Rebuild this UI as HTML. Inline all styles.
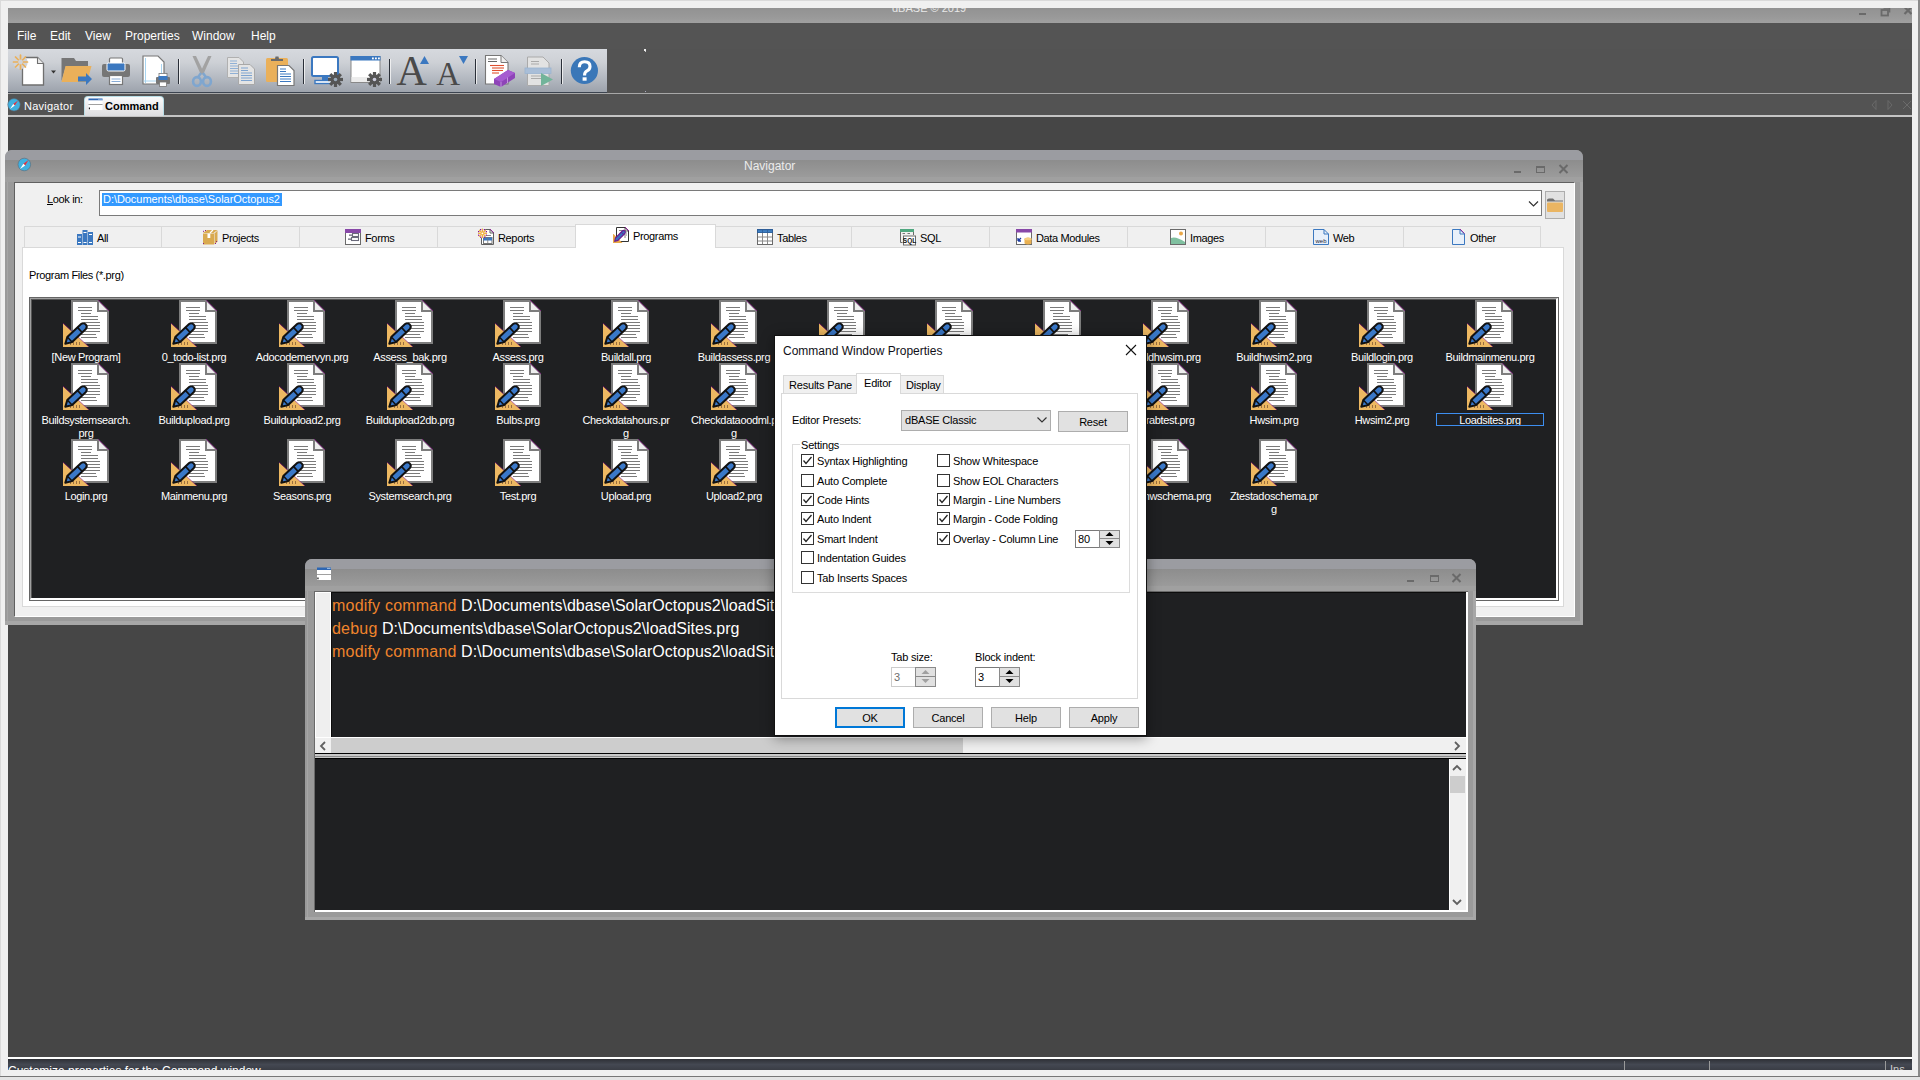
<!DOCTYPE html>
<html><head><meta charset="utf-8">
<style>
*{margin:0;padding:0;box-sizing:border-box}
html,body{width:1920px;height:1080px;overflow:hidden;background:#f0f0f0;font-family:"Liberation Sans",sans-serif;font-size:11px;color:#000}
.a{position:absolute}
.t{position:absolute;white-space:nowrap;line-height:1}
.ms{font-size:11px;letter-spacing:-0.35px}
.dl{font-size:11px;letter-spacing:-0.2px}
</style></head><body>
<svg width="0" height="0" style="position:absolute">
<defs>
<g id="prg">
 <path d="M1 1 H27 L37 11 V43 H1 Z" fill="#fff" stroke="#7d7d7d" stroke-width="2"/>
 <path d="M27 1 V11 H37" fill="#eee" stroke="#7d7d7d" stroke-width="2"/>
 <path d="M27 0 L38 11" stroke="#800080" stroke-width="1" opacity=".6"/>
 <g stroke="#7a7a7a" stroke-width="1">
  <line x1="7" y1="7.5" x2="21" y2="7.5"/><line x1="7" y1="10.5" x2="21" y2="10.5"/>
  <line x1="10" y1="13.5" x2="20" y2="13.5"/><line x1="10" y1="16.5" x2="27" y2="16.5"/>
  <line x1="10" y1="19.5" x2="27" y2="19.5"/><line x1="13" y1="22.5" x2="29" y2="22.5"/>
  <line x1="13" y1="25.5" x2="29" y2="25.5"/><line x1="13" y1="28.5" x2="29" y2="28.5"/>
  <line x1="13" y1="31.5" x2="29" y2="31.5"/><line x1="10" y1="34.5" x2="25" y2="34.5"/>
  <line x1="10" y1="37.5" x2="26" y2="37.5"/>
 </g>
 <path d="M-8 23.5 L18 47 H-8 Z" fill="#edb862"/>
 <path d="M-8 23 L18 47" stroke="#800080" stroke-width="1" opacity=".55"/>
 <g stroke="#9a7040" stroke-width="1"><line x1="2.5" y1="42" x2="2.5" y2="45"/><line x1="5.5" y1="42" x2="5.5" y2="45"/><line x1="8.5" y1="42" x2="8.5" y2="45"/><line x1="-0.5" y1="43" x2="-0.5" y2="45"/></g>
 <path d="M-5.7 43.7 L-3.7 37 L10.1 24 A3.5 3.5 0 0 1 14.9 29 L1.1 42.1 Z" fill="#3a78c8" stroke="#111" stroke-width="2" stroke-linejoin="round"/>
 <path d="M6.4 27.4 L11.2 32.5" stroke="#111" stroke-width="1.8"/>
 <path d="M-3.7 37 L1.1 42.1" stroke="#111" stroke-width="1.5"/>
</g>
</defs></svg>

<div class="a" style="left:0;top:0;width:1920px;height:1px;background:#dadada"></div>
<div class="a" style="left:0;top:0;width:1px;height:1080px;background:#dadada"></div>
<div class="a" style="left:1918px;top:0;width:2px;height:1080px;background:#8a8a8a"></div>
<div class="a" style="left:8px;top:8px;width:1904px;height:15px;background:linear-gradient(#929292,#999 60%,#a0a0a0)"></div>
<div class="a" style="left:8px;top:8px;width:1904px;height:15px;overflow:hidden">
  <div class="t" style="left:884px;top:-5px;font-size:11px;color:#e8e8e8">dBASE © 2019</div>
  <div class="a" style="left:1851px;top:5px;width:7px;height:2px;background:#6a6a6a"></div>
  <svg class="a" style="left:1872px;top:-1px" width="44" height="12"><path d="M3.5 1 H9.5 V5.5" fill="none" stroke="#6a6a6a" stroke-width="1.6"/><rect x="1.5" y="3" width="6.5" height="5.5" fill="none" stroke="#6a6a6a" stroke-width="1.8"/><path d="M24.5 0 L31.5 7 M31.5 0 L24.5 7" stroke="#6a6a6a" stroke-width="2.2"/></svg>
</div>
<div class="a" style="left:8px;top:23px;width:1904px;height:26px;background:#545454"></div>

<div class="t" style="left:17px;top:30px;font-size:12px;color:#fff">File</div>
<div class="t" style="left:50px;top:30px;font-size:12px;color:#fff">Edit</div>
<div class="t" style="left:85px;top:30px;font-size:12px;color:#fff">View</div>
<div class="t" style="left:125px;top:30px;font-size:12px;color:#fff">Properties</div>
<div class="t" style="left:192px;top:30px;font-size:12px;color:#fff">Window</div>
<div class="t" style="left:251px;top:30px;font-size:12px;color:#fff">Help</div>
<div class="a" style="left:8px;top:49px;width:1904px;height:44px;background:#535353"></div>
<div class="a" style="left:8px;top:49px;width:599px;height:43px;background:linear-gradient(#d6d9de 0%,#ced1d6 30%,#b6bbc3 65%,#9da3ac 100%)"></div>
<div class="a" style="left:8px;top:92px;width:599px;height:1px;background:#3c4450"></div>
<div class="a" style="left:8px;top:93px;width:1904px;height:1px;background:#a8a8a8"></div>

<svg class="a" style="left:0;top:0" width="620" height="100" viewBox="0 0 620 100">
<!-- new doc -->
<path d="M22.5 57.5 H37.5 L43.5 63.5 V85 H22.5 Z" fill="#fff" stroke="#6f6f6f" stroke-width="1.3"/>
<path d="M37.5 57.5 V63.5 H43.5" fill="#e8e8e8" stroke="#6f6f6f" stroke-width="1.1"/>
<circle cx="20.5" cy="62" r="7.2" fill="#d0d3d8"/>
<g stroke="#eab05a" stroke-width="1.7" stroke-linecap="round">
<line x1="20.5" y1="55" x2="20.5" y2="69"/><line x1="13.5" y1="62" x2="27.5" y2="62"/>
<line x1="15.5" y1="57" x2="25.5" y2="67"/><line x1="25.5" y1="57" x2="15.5" y2="67"/>
</g>
<circle cx="20.5" cy="62" r="2.4" fill="#d0d3d8"/>
<path d="M51 70.5 H56 L53.5 73.5 Z" fill="#333"/>
<!-- open folder -->
<path d="M61.5 58 H74 L76 61 H88 V66 H66 L61.5 81 Z" fill="#767676"/>
<path d="M65.5 66 H91.5 L87 82 H61.5 Z" fill="#eab05a"/>
<path d="M78 76.5 H86 V73 L92 79 L86 85 V81.5 H78 Z" fill="#3b78c0"/>
<!-- printer -->
<rect x="109.5" y="58" width="13" height="6" rx="1" fill="#fff" stroke="#777" stroke-width="1.2"/>
<rect x="102" y="64" width="28" height="13" rx="2" fill="#767676"/>
<rect x="107" y="63" width="18" height="8" rx="1.5" fill="#3b78c0" stroke="#fff" stroke-width="1"/>
<rect x="109.5" y="75.5" width="13" height="9" fill="#fff" stroke="#777" stroke-width="1.2"/>
<line x1="111.5" y1="79" x2="120.5" y2="79" stroke="#7aa1d0" stroke-width=".9"/>
<line x1="111.5" y1="81.5" x2="120.5" y2="81.5" stroke="#7aa1d0" stroke-width=".9"/>
<!-- print preview -->
<path d="M143 56 H158 L164 62 V84 H143 Z" fill="#fff" stroke="#777" stroke-width="1.2"/>
<path d="M145.5 58 V83 M161.5 64 V83 M143.5 81 H163.5" stroke="#a8d4f0" stroke-width="1"/>
<rect x="156" y="77" width="14" height="7" rx="1" fill="#767676"/>
<rect x="159" y="73.5" width="8" height="4" fill="#fff" stroke="#777" stroke-width=".8"/>
<rect x="158.5" y="76" width="9" height="4" fill="#3b78c0"/>
<rect x="159.5" y="82" width="7" height="4.5" fill="#fff" stroke="#777" stroke-width=".8"/>
<!-- separators -->
<g fill="#2a2f38"><rect x="178" y="59" width="1.2" height="25"/><rect x="303" y="59" width="1.2" height="25"/><rect x="389" y="59" width="1.2" height="25"/><rect x="475" y="59" width="1.2" height="25"/><rect x="561" y="59" width="1.2" height="25"/></g>
<g fill="#fff"><rect x="179.2" y="59" width="0.8" height="25"/><rect x="304.2" y="59" width="0.8" height="25"/><rect x="390.2" y="59" width="0.8" height="25"/><rect x="476.2" y="59" width="0.8" height="25"/><rect x="562.2" y="59" width="0.8" height="25"/></g>
<!-- scissors -->
<path d="M192.5 56 L196 56 L203.5 72 L201 75 Z" fill="#a2a2a2"/>
<path d="M211.5 56 L208 56 L200.5 72 L203 75 Z" fill="#a2a2a2"/>
<path d="M201 73 L197.5 78 M203 73 L206.5 78" stroke="#7fa6cf" stroke-width="2.4"/>
<ellipse cx="197" cy="81.5" rx="3.9" ry="4.4" fill="none" stroke="#7fa6cf" stroke-width="2.6"/>
<ellipse cx="207" cy="81.5" rx="3.9" ry="4.4" fill="none" stroke="#7fa6cf" stroke-width="2.6"/>
<!-- copy -->
<path d="M227.5 57.5 H239 L243.5 62 V77.5 H227.5 Z" fill="#e4e4e4" stroke="#b0b0b0" stroke-width="1"/>
<g stroke="#8fb0d6" stroke-width="1"><line x1="230" y1="61" x2="237" y2="61"/><line x1="230" y1="63.5" x2="237" y2="63.5"/><line x1="230" y1="66" x2="241" y2="66"/><line x1="230" y1="68.5" x2="241" y2="68.5"/><line x1="230" y1="71" x2="241" y2="71"/><line x1="230" y1="73.5" x2="241" y2="73.5"/></g>
<path d="M238.5 64.5 H250 L254.5 69 V84.5 H238.5 Z" fill="#e4e4e4" stroke="#a8a8a8" stroke-width="1"/>
<g stroke="#7ea4d0" stroke-width="1"><line x1="241" y1="68" x2="248" y2="68"/><line x1="241" y1="70.5" x2="248" y2="70.5"/><line x1="241" y1="73" x2="252" y2="73"/><line x1="241" y1="75.5" x2="252" y2="75.5"/><line x1="241" y1="78" x2="252" y2="78"/><line x1="241" y1="80.5" x2="252" y2="80.5"/></g>
<!-- paste -->
<rect x="266" y="58" width="22" height="24" rx="1.5" fill="#eab05a"/>
<path d="M271 61 H283 V59 H279 L278.5 56.5 H275.5 L275 59 H271 Z" fill="#6a6a6a"/>
<path d="M277.5 65.5 H289 L294 70.5 V85.5 H277.5 Z" fill="#fff" stroke="#777" stroke-width="1.2"/>
<g stroke="#3b78c0" stroke-width="1"><line x1="280" y1="69" x2="286" y2="69"/><line x1="280" y1="71.5" x2="286" y2="71.5"/><line x1="280" y1="74" x2="291" y2="74"/><line x1="280" y1="76.5" x2="291" y2="76.5"/><line x1="280" y1="79" x2="291" y2="79"/><line x1="280" y1="81.5" x2="291" y2="81.5"/></g>
<!-- monitor gear -->
<rect x="312" y="57" width="26" height="19" rx="1.5" fill="#fff" stroke="#3b78c0" stroke-width="2"/>
<rect x="322" y="76" width="6" height="5" fill="#3b78c0"/>
<rect x="315" y="80.5" width="17" height="3" fill="#fff" stroke="#3b78c0" stroke-width="1.4"/>
<g transform="translate(335.5 79.5)"><circle r="5" fill="#555"/><g fill="#555"><rect x="-1.6" y="-7.5" width="3.2" height="15"/><rect x="-7.5" y="-1.6" width="15" height="3.2"/><rect x="-1.6" y="-7.5" width="3.2" height="15" transform="rotate(45)"/><rect x="-1.6" y="-7.5" width="3.2" height="15" transform="rotate(-45)"/></g><circle r="1.8" fill="#9ab"/></g>
<!-- window gear -->
<rect x="351" y="56.5" width="29" height="26" fill="#fff" stroke="#888" stroke-width="1"/>
<rect x="350.5" y="56" width="30" height="4.5" fill="#3b78c0"/>
<g fill="#fff"><rect x="372" y="57.5" width="1.8" height="1.8"/><rect x="375" y="57.5" width="1.8" height="1.8"/><rect x="378" y="57.5" width="1.8" height="1.8"/></g>
<rect x="351.5" y="77" width="28" height="5" fill="#ececec"/>
<g transform="translate(374.5 79.5)"><circle r="5" fill="#555"/><g fill="#555"><rect x="-1.6" y="-7.5" width="3.2" height="15"/><rect x="-7.5" y="-1.6" width="15" height="3.2"/><rect x="-1.6" y="-7.5" width="3.2" height="15" transform="rotate(45)"/><rect x="-1.6" y="-7.5" width="3.2" height="15" transform="rotate(-45)"/></g><circle r="1.8" fill="#ccd"/></g>
<!-- A up / A down -->
<text x="396.5" y="85" font-family="Liberation Serif" font-size="42" fill="#4a4a4a">A</text>
<path d="M420 64 L424.5 56 L429 64 Z" fill="#3b78c0"/>
<text x="436.3" y="85" font-family="Liberation Serif" font-size="33" fill="#4a4a4a">A</text>
<path d="M459 56 H468 L463.5 64 Z" fill="#3b78c0"/>
<!-- doc red + eraser -->
<path d="M485.5 55.5 H501 L508 62.5 V84 H485.5 Z" fill="#fff" stroke="#777" stroke-width="1.1"/>
<path d="M501 55.5 V62.5 H508" fill="#eee" stroke="#777" stroke-width="1"/>
<g stroke="#666" stroke-width="1"><line x1="488" y1="59" x2="497" y2="59"/><line x1="488" y1="61.5" x2="497" y2="61.5"/></g>
<g stroke="#e05030" stroke-width="1.1"><line x1="490" y1="65.5" x2="504" y2="65.5"/><line x1="492" y1="68" x2="504" y2="68"/><line x1="492" y1="70.5" x2="503" y2="70.5"/><line x1="492" y1="73" x2="499" y2="73"/></g>
<path d="M494 79 L508 70 L515 73 L515 78 L501 87 L494 84 Z" fill="#8e44b8"/>
<path d="M494 79 L508 70 L515 73 L501 82 Z" fill="#a65bd0"/>
<path d="M501 82 V87 M507.5 77.5 V83" stroke="#d9b8ee" stroke-width=".7"/>
<!-- disabled doc play -->
<path d="M527.5 57 H543 L549 63 V85.5 H527.5 Z" fill="#e2e2e2" stroke="#aaa" stroke-width="1"/>
<g stroke="#aaa" stroke-width="1"><line x1="531" y1="61.5" x2="539" y2="61.5"/><line x1="531" y1="64" x2="539" y2="64"/><line x1="531" y1="76" x2="545" y2="76"/><line x1="531" y1="78.5" x2="545" y2="78.5"/></g>
<rect x="525" y="68" width="26" height="5.5" fill="#a9bed8" stroke="#9bb3d0" stroke-width=".8"/>
<path d="M541 73 L553 79.5 L541 86 Z" fill="#72b49a"/>
<!-- help -->
<circle cx="584.4" cy="70.5" r="13.6" fill="#3a77b8"/>
<path d="M579.3 67.2 Q579.3 61.8 584.6 61.8 Q590 61.8 590 66.4 Q590 69.3 587 70.8 Q584.6 72 584.6 74.8 V75.5" fill="none" stroke="#fff" stroke-width="3.1"/><rect x="582.6" y="77.3" width="4" height="3.4" fill="#fff"/>
</svg>

<div class="a" style="left:8px;top:94px;width:1904px;height:21px;background:#535353"></div>
<div class="a" style="left:8px;top:115px;width:1904px;height:2px;background:#c4c4c4"></div>
<div class="a" style="left:8px;top:117px;width:1904px;height:940px;background:#464646"></div>
<div class="a" style="left:8px;top:1057px;width:1904px;height:2px;background:#fff"></div>
<div class="a" style="left:8px;top:1059px;width:1904px;height:11px;background:linear-gradient(#2e3036,#444852 50%,#3a3d45)"></div>
<div class="a" style="left:0;top:1076px;width:1920px;height:1px;background:#777"></div>

<svg class="a" style="left:7px;top:98px" width="14" height="14"><circle cx="7" cy="6.8" r="6.2" fill="#3fb0e0" stroke="#5a6a78" stroke-width=".6"/><path d="M11 2.5 L6.2 6 L7.8 7.6 Z" fill="#e8303a"/><path d="M3 11 L6.2 6 L7.8 7.6 Z" fill="#fff"/></svg>
<div class="t" style="left:24px;top:101px;font-size:11px;letter-spacing:0.25px;color:#fff">Navigator</div>
<div class="a" style="left:84px;top:96px;width:80px;height:20px;background:linear-gradient(#fafafa,#e6e6e8 70%,#dcdde0);border:1px solid #b8dde6;border-bottom:none;border-radius:4px 4px 0 0"></div>
<svg class="a" style="left:88px;top:98px" width="15" height="13"><rect x=".5" y=".5" width="14" height="2" fill="#2d66b3"/><rect x="10" y=".7" width="4" height="1" fill="#8fb4e0"/><rect x=".5" y="2.5" width="14" height="3.5" fill="#fff"/><rect x=".5" y="6" width="14" height="1" fill="#a0a0a0"/><rect x=".5" y="7" width="14" height="5" fill="#fff"/><rect x=".8" y="9.5" width="1.2" height="1.8" fill="#222"/></svg>
<div class="t" style="left:105px;top:101px;font-size:11px;font-weight:bold;color:#000">Command</div>
<svg class="a" style="left:1870px;top:99px" width="45" height="12"><path d="M6 1.5 L2 6 L6 10.5 Z" fill="none" stroke="#6e6e6e" stroke-width=".8"/><path d="M18 1.5 L22 6 L18 10.5 Z" fill="none" stroke="#6e6e6e" stroke-width=".8"/><path d="M33 2 L41 10 M41 2 L33 10" stroke="#6e6e6e" stroke-width=".9"/></svg>
<div class="a" style="left:8px;top:1059px;width:1904px;height:11px;overflow:hidden">
<div class="t" style="left:0px;top:6px;font-size:12px;color:#fff">Customize properties for the Command window</div>
<div class="a" style="left:1616px;top:2px;width:1px;height:9px;background:#9a9a9a"></div>
<div class="a" style="left:1701px;top:2px;width:1px;height:9px;background:#9a9a9a"></div>
<div class="a" style="left:1877px;top:2px;width:1px;height:9px;background:#9a9a9a"></div>
<div class="t" style="left:1882px;top:5px;font-size:11px;color:#ccc">Ins</div>
</div>
<div class="a" style="left:644px;top:49px;width:2px;height:2px;background:#eee"></div><div class="a" style="left:645px;top:51px;width:1px;height:1px;background:#ccc"></div><div class="a" style="left:645px;top:91px;width:1px;height:1px;background:#aab"></div>

<div class="a" style="left:0;top:1077px;width:1920px;height:3px;background:#e4e4e4"></div>

<div class="a" style="left:5px;top:150px;width:1578px;height:475px;background:#9a9a9a;border-radius:7px 7px 0 0;overflow:hidden"><div class="a" style="left:0;top:0;width:1578px;height:10px;background:#9b9ca1"></div><div class="a" style="left:0;top:10px;width:1578px;height:17px;background:linear-gradient(#8d8d8d,#9b9b9b)"></div><div class="a" style="left:0;top:27px;width:100%;height:5px;background:#a0a0a0"></div></div>
<div class="t" style="left:744px;top:160px;font-size:12px;color:#ececec">Navigator</div>
<div class="a" style="left:1580px;top:182px;width:3px;height:443px;background:#a7a7a7"></div><div class="a" style="left:5px;top:621px;width:1578px;height:4px;background:#a7a7a7"></div><div class="a" style="left:7px;top:182px;width:1px;height:439px;background:#a5a5a5"></div>
<div class="a" style="left:14px;top:182px;width:1561px;height:435px;background:#f0f0f0;border-top:1px solid #606060;border-left:1px solid #606060;border-right:1px solid #fff;border-bottom:1px solid #fff"></div>
<div class="t ms" style="left:47px;top:194px">Look in:</div>
<div class="a" style="left:47px;top:204px;width:6px;height:1px;background:#000"></div>
<div class="a" style="left:99px;top:190px;width:1443px;height:26px;background:#fff;border:1px solid #7a7a7a"></div>
<div class="a" style="left:102px;top:193px;width:180px;height:13px;background:#3399ff"></div>
<div class="t" style="left:103px;top:194px;font-size:11px;letter-spacing:-0.05px;color:#fff">D:\Documents\dbase\SolarOctopus2</div>
<svg class="a" style="left:1528px;top:200px" width="11" height="8"><path d="M1 1.5 L5.5 6 L10 1.5" fill="none" stroke="#333" stroke-width="1.2"/></svg>
<div class="a" style="left:1545px;top:191px;width:20px;height:28px;background:#e1e1e1;border:1px solid #adadad"></div>
<svg class="a" style="left:1546px;top:198px" width="18" height="16"><path d="M1 2 Q1 .5 3 .5 H7 L9 2.5 H17 V3.5 H1 Z" fill="#707070"/><rect x="1" y="4.5" width="16" height="9.5" rx="1" fill="#eab562"/></svg>
<div class="a" style="left:22px;top:247px;width:1542px;height:360px;background:#fff;border:1px solid #d9d9d9"></div>
<div class="a" style="left:24px;top:226px;width:138px;height:22px;background:#f0f0f0;border:1px solid #d9d9d9"></div>
<div class="t ms" style="left:97px;top:233px">All</div>
<div class="a" style="left:161px;top:226px;width:139px;height:22px;background:#f0f0f0;border:1px solid #d9d9d9"></div>
<div class="t ms" style="left:222px;top:233px">Projects</div>
<div class="a" style="left:299px;top:226px;width:139px;height:22px;background:#f0f0f0;border:1px solid #d9d9d9"></div>
<div class="t ms" style="left:365px;top:233px">Forms</div>
<div class="a" style="left:437px;top:226px;width:139px;height:22px;background:#f0f0f0;border:1px solid #d9d9d9"></div>
<div class="t ms" style="left:498px;top:233px">Reports</div>
<div class="a" style="left:575px;top:224px;width:141px;height:24px;background:#fff;border:1px solid #d9d9d9;border-bottom:none"></div>
<div class="t ms" style="left:633px;top:231px">Programs</div>
<div class="a" style="left:715px;top:226px;width:137px;height:22px;background:#f0f0f0;border:1px solid #d9d9d9"></div>
<div class="t ms" style="left:777px;top:233px">Tables</div>
<div class="a" style="left:851px;top:226px;width:139px;height:22px;background:#f0f0f0;border:1px solid #d9d9d9"></div>
<div class="t ms" style="left:920px;top:233px">SQL</div>
<div class="a" style="left:989px;top:226px;width:139px;height:22px;background:#f0f0f0;border:1px solid #d9d9d9"></div>
<div class="t ms" style="left:1036px;top:233px">Data Modules</div>
<div class="a" style="left:1127px;top:226px;width:139px;height:22px;background:#f0f0f0;border:1px solid #d9d9d9"></div>
<div class="t ms" style="left:1190px;top:233px">Images</div>
<div class="a" style="left:1265px;top:226px;width:139px;height:22px;background:#f0f0f0;border:1px solid #d9d9d9"></div>
<div class="t ms" style="left:1333px;top:233px">Web</div>
<div class="a" style="left:1403px;top:226px;width:138px;height:22px;background:#f0f0f0;border:1px solid #d9d9d9"></div>
<div class="t ms" style="left:1470px;top:233px">Other</div>
<svg class="a" style="left:77px;top:229px" width="17" height="17" viewBox="0 0 17 17"><rect x="0" y="5" width="5" height="11" fill="#3b78c0"/><rect x="5.5" y="1" width="5" height="15" fill="#3b78c0"/><rect x="11" y="3" width="5" height="13" fill="#3b78c0"/><g fill="#fff"><rect x="1" y="7.5" width="3" height="1"/><rect x="1" y="13" width="3" height="1"/><rect x="6.5" y="3" width="3" height="1"/><rect x="6.5" y="13" width="3" height="1"/><rect x="12" y="5" width="3" height="1"/><rect x="12" y="13" width="3" height="1"/></g></svg>
<svg class="a" style="left:202px;top:229px" width="17" height="17" viewBox="0 0 17 17"><path d="M1 4 H11.5 L15.5 1 H5 Z" fill="#d9aa50"/><rect x="1" y="4.5" width="11" height="11" fill="#d9aa50"/><path d="M12.5 4.5 L15.5 1.5 V12.5 L12.5 15.5 Z" fill="#d9aa50"/><rect x="5.5" y="4.5" width="2.8" height="4.5" fill="#fff"/><path d="M8 4 L11 1" stroke="#fff" stroke-width="1.2"/><g fill="#8a1a8a"><rect x="1" y="1.8" width="1" height="1"/><rect x="3" y="1" width="1" height="1"/><rect x="1" y="14" width="1" height="1"/><rect x="14" y="12" width="1" height="1"/><rect x="13" y="14" width="1" height="1"/></g></svg>
<svg class="a" style="left:345px;top:229px" width="17" height="17" viewBox="0 0 17 17"><rect x=".5" y="1.5" width="15" height="14" fill="#fff" stroke="#6a6a6a"/><rect x="0" y="0" width="16" height="4" fill="#8848a8"/><rect x="4" y="5.5" width="3" height="1.3" fill="#6a6a7a"/><rect x="7.5" y="4.5" width="6" height="3" fill="none" stroke="#6a6a7a" stroke-width="1.1"/><rect x="3" y="9.5" width="3" height="1.3" fill="#6a6a7a"/><rect x="6.5" y="8.5" width="7" height="3" fill="none" stroke="#6a6a7a" stroke-width="1.1"/></svg>
<svg class="a" style="left:478px;top:228px" width="17" height="17" viewBox="0 0 17 17"><path d="M3.5 1.5 H12 L15.5 5 V16.5 H3.5 Z" fill="#fff" stroke="#606060"/><path d="M12 1.5 V5 H15.5" fill="none" stroke="#606060"/><path d="M12 1 L16 5" stroke="#8a1090" stroke-width=".8"/><line x1="9" y1="7.5" x2="13" y2="7.5" stroke="#888"/><rect x="5.5" y="9.5" width="8.5" height="6" fill="#fff" stroke="#777" stroke-width="1"/><rect x="5.5" y="9.5" width="8.5" height="3" fill="#3a78c0"/><line x1="9.75" y1="9.5" x2="9.75" y2="15.5" stroke="#777" stroke-width=".8"/><circle cx="4.4" cy="5.3" r="4.6" fill="#f0f0f0"/><g stroke="#f0b040" stroke-width="1.3"><line x1="4.4" y1="0.6" x2="4.4" y2="10"/><line x1="-0.3" y1="5.3" x2="9.1" y2="5.3"/><line x1="1.1" y1="2" x2="7.7" y2="8.6"/><line x1="7.7" y1="2" x2="1.1" y2="8.6"/></g><g fill="#8a1090"><rect x="2" y="1" width="1.2" height="1.2"/><rect x="5.8" y="1" width="1.2" height="1.2"/><rect x="0" y="3" width="1.2" height="1.2"/><rect x="7.8" y="3" width="1.2" height="1.2"/><rect x="0" y="6.6" width="1.2" height="1.2"/><rect x="7.8" y="6.6" width="1.2" height="1.2"/><rect x="2" y="8.6" width="1.2" height="1.2"/><rect x="5.8" y="8.6" width="1.2" height="1.2"/></g><circle cx="4.4" cy="5.3" r=".9" fill="#fff"/></svg>
<svg class="a" style="left:613px;top:226px" width="17" height="17" viewBox="0 0 17 17"><path d="M3.5 1.5 H12 L15.5 5 V15.5 H3.5 Z" fill="#fff" stroke="#333" stroke-width="1"/><path d="M12 1.5 V5 H15.5" fill="none" stroke="#333" stroke-width=".8"/><path d="M12 1 L16 5" stroke="#8a1090" stroke-width=".9"/><g stroke="#777" stroke-width=".9"><line x1="6" y1="4.5" x2="10" y2="4.5"/><line x1="10" y1="7" x2="14" y2="7"/><line x1="11" y1="9" x2="14" y2="9"/><line x1="11" y1="11" x2="13" y2="11"/></g><path d="M-0.5 7 V17 H9.5 Z" fill="#e8a848"/><path d="M1.8 15.2 L2.4 12 L9.3 5 Q10.6 3.8 11.8 5 Q13 6.2 11.8 7.5 L4.9 14.4 Z" fill="#3a70c0" stroke="#6a1a90" stroke-width="1.1"/><path d="M8.4 6.2 L10.8 8.6" stroke="#6a1a90" stroke-width="1"/></svg>
<svg class="a" style="left:757px;top:229px" width="17" height="17" viewBox="0 0 17 17"><rect x=".5" y=".5" width="15" height="15" fill="#fff" stroke="#6a6a6a"/><rect x="0" y="0" width="16" height="4" fill="#2e5e98"/><rect x="1" y="1.2" width="14" height="2" fill="#3f80c4"/><g stroke="#8a8a8a" stroke-width="1"><line x1="5.5" y1="4" x2="5.5" y2="15"/><line x1="10.5" y1="4" x2="10.5" y2="15"/><line x1="1" y1="8" x2="15" y2="8"/><line x1="1" y1="12" x2="15" y2="12"/></g><g stroke="#2e5e98" stroke-width=".8"><line x1="5.5" y1="0" x2="5.5" y2="4"/><line x1="10.5" y1="0" x2="10.5" y2="4"/></g></svg>
<svg class="a" style="left:900px;top:229px" width="17" height="17" viewBox="0 0 17 17"><path d="M.5 3 V13.5 H2.5 M13.5 3 V6" fill="none" stroke="#6a6a6a" stroke-width="1"/><rect x="0" y="0" width="14" height="3" fill="#50a880"/><rect x="2.5" y="4" width="2.5" height="1" fill="#777"/><rect x="7.5" y="4" width="2.5" height="1" fill="#777"/><rect x="3.5" y="7" width="12" height="9" fill="#fff" stroke="#6a6a6a" stroke-width="1"/><text x="9.5" y="14.3" font-family="Liberation Sans" font-weight="bold" font-size="6.5" text-anchor="middle" fill="#111">SQL</text></svg>
<svg class="a" style="left:1016px;top:229px" width="17" height="17" viewBox="0 0 17 17"><rect x=".5" y=".5" width="15" height="15" fill="#fff" stroke="#6a6a6a"/><rect x="0" y="0" width="16" height="3.5" fill="#8848a8"/><path d="M2 12 L5 9 M2 12 H5 M2 12 V9" stroke="#1a3aa0" stroke-width="1.3" fill="none"/><ellipse cx="12" cy="10" rx="3.5" ry="1.5" fill="#eab050"/><path d="M8.5 10 V14.5 Q12 16.5 15.5 14.5 V10" fill="#eab050"/><ellipse cx="12" cy="10" rx="3.5" ry="1.3" fill="#f5cf80"/></svg>
<svg class="a" style="left:1170px;top:229px" width="17" height="17" viewBox="0 0 17 17"><rect x=".5" y=".5" width="15" height="15" fill="#fff" stroke="#6a6a6a"/><circle cx="11" cy="4.5" r="2" fill="#eaa848"/><path d="M1 15 V9 Q6 7 15 13 V15 Z" fill="#80c0a0"/></svg>
<svg class="a" style="left:1313px;top:229px" width="17" height="17" viewBox="0 0 17 17"><path d="M.5 .5 H11 L15.5 5 V15.5 H.5 Z" fill="#e8f0fa" stroke="#3b78c0" stroke-width="1"/><path d="M11 .5 V5 H15.5" fill="none" stroke="#3b78c0"/><text x="8" y="13.5" font-family="Liberation Sans" font-size="6" text-anchor="middle" fill="#223">web</text></svg>
<svg class="a" style="left:1452px;top:229px" width="17" height="17" viewBox="0 0 17 17"><path d="M.5 .5 H8 L12.5 5 V15.5 H.5 Z" fill="#e8f0fa" stroke="#3b78c0" stroke-width="1"/><path d="M8 .5 V5 H12.5" fill="none" stroke="#3b78c0"/><path d="M8 0 L12.5 4.5" stroke="#8a1090" stroke-width=".8"/></svg>
<svg class="a" style="left:17px;top:157px" width="15" height="15"><circle cx="7.3" cy="7.5" r="6.3" fill="#3fb0e0" stroke="#5a6a78" stroke-width=".6"/><path d="M11.5 3 L6.4 6.7 L8.2 8.5 Z" fill="#e8303a"/><path d="M3 12 L6.4 6.7 L8.2 8.5 Z" fill="#fff"/></svg><div class="a" style="left:1514px;top:171px;width:7px;height:2px;background:#6a6a6a"></div><div class="a" style="left:1536px;top:166px;width:9px;height:7px;border:1px solid #6a6a6a;border-top-width:2px"></div><svg class="a" style="left:1558px;top:164px" width="11" height="10"><path d="M1.5 1 L9.5 9 M9.5 1 L1.5 9" stroke="#6a6a6a" stroke-width="2"/></svg>
<div class="t ms" style="left:29px;top:270px">Program Files (*.prg)</div>
<div class="a" style="left:29px;top:297px;width:1530px;height:304px;background:#1f2022;border-top:1px solid #656565;border-left:1px solid #656565;border-right:1px solid #656565;border-bottom:1px solid #656565"></div>
<div class="a" style="left:30px;top:298px;width:1528px;height:302px;border-top:1px solid #a0a0a0;border-left:1px solid #a0a0a0;border-right:2px solid #fff;border-bottom:2px solid #fff"></div>
<div class="a" style="left:31px;top:299px;width:1525px;height:1px;background:#555"></div><div class="a" style="left:31px;top:299px;width:1px;height:299px;background:#555"></div>
<div class="a" style="left:32px;top:300px;width:1524px;height:298px;overflow:hidden">
<svg class="a" style="left:39px;top:0px;overflow:visible" width="48" height="48"><use href="#prg" x="0" y="0"/></svg>
<div class="t ms" style="left:-46px;width:200px;text-align:center;top:52px;color:#fff">[New Program]</div>
<svg class="a" style="left:147px;top:0px;overflow:visible" width="48" height="48"><use href="#prg" x="0" y="0"/></svg>
<div class="t ms" style="left:62px;width:200px;text-align:center;top:52px;color:#fff">0_todo-list.prg</div>
<svg class="a" style="left:255px;top:0px;overflow:visible" width="48" height="48"><use href="#prg" x="0" y="0"/></svg>
<div class="t ms" style="left:170px;width:200px;text-align:center;top:52px;color:#fff">Adocodemervyn.prg</div>
<svg class="a" style="left:363px;top:0px;overflow:visible" width="48" height="48"><use href="#prg" x="0" y="0"/></svg>
<div class="t ms" style="left:278px;width:200px;text-align:center;top:52px;color:#fff">Assess_bak.prg</div>
<svg class="a" style="left:471px;top:0px;overflow:visible" width="48" height="48"><use href="#prg" x="0" y="0"/></svg>
<div class="t ms" style="left:386px;width:200px;text-align:center;top:52px;color:#fff">Assess.prg</div>
<svg class="a" style="left:579px;top:0px;overflow:visible" width="48" height="48"><use href="#prg" x="0" y="0"/></svg>
<div class="t ms" style="left:494px;width:200px;text-align:center;top:52px;color:#fff">Buildall.prg</div>
<svg class="a" style="left:687px;top:0px;overflow:visible" width="48" height="48"><use href="#prg" x="0" y="0"/></svg>
<div class="t ms" style="left:602px;width:200px;text-align:center;top:52px;color:#fff">Buildassess.prg</div>
<svg class="a" style="left:795px;top:0px;overflow:visible" width="48" height="48"><use href="#prg" x="0" y="0"/></svg>
<div class="t ms" style="left:710px;width:200px;text-align:center;top:52px;color:#fff">Buildcheck.prg</div>
<svg class="a" style="left:903px;top:0px;overflow:visible" width="48" height="48"><use href="#prg" x="0" y="0"/></svg>
<div class="t ms" style="left:818px;width:200px;text-align:center;top:52px;color:#fff">Buildhours.prg</div>
<svg class="a" style="left:1011px;top:0px;overflow:visible" width="48" height="48"><use href="#prg" x="0" y="0"/></svg>
<div class="t ms" style="left:926px;width:200px;text-align:center;top:52px;color:#fff">Buildhwschema.prg</div>
<svg class="a" style="left:1119px;top:0px;overflow:visible" width="48" height="48"><use href="#prg" x="0" y="0"/></svg>
<div class="t ms" style="left:1034px;width:200px;text-align:center;top:52px;color:#fff">Buildhwsim.prg</div>
<svg class="a" style="left:1227px;top:0px;overflow:visible" width="48" height="48"><use href="#prg" x="0" y="0"/></svg>
<div class="t ms" style="left:1142px;width:200px;text-align:center;top:52px;color:#fff">Buildhwsim2.prg</div>
<svg class="a" style="left:1335px;top:0px;overflow:visible" width="48" height="48"><use href="#prg" x="0" y="0"/></svg>
<div class="t ms" style="left:1250px;width:200px;text-align:center;top:52px;color:#fff">Buildlogin.prg</div>
<svg class="a" style="left:1443px;top:0px;overflow:visible" width="48" height="48"><use href="#prg" x="0" y="0"/></svg>
<div class="t ms" style="left:1358px;width:200px;text-align:center;top:52px;color:#fff">Buildmainmenu.prg</div>
<svg class="a" style="left:39px;top:63px;overflow:visible" width="48" height="48"><use href="#prg" x="0" y="0"/></svg>
<div class="t ms" style="left:-46px;width:200px;text-align:center;top:115px;color:#fff">Buildsystemsearch.</div>
<div class="t ms" style="left:-46px;width:200px;text-align:center;top:128px;color:#fff">prg</div>
<svg class="a" style="left:147px;top:63px;overflow:visible" width="48" height="48"><use href="#prg" x="0" y="0"/></svg>
<div class="t ms" style="left:62px;width:200px;text-align:center;top:115px;color:#fff">Buildupload.prg</div>
<svg class="a" style="left:255px;top:63px;overflow:visible" width="48" height="48"><use href="#prg" x="0" y="0"/></svg>
<div class="t ms" style="left:170px;width:200px;text-align:center;top:115px;color:#fff">Buildupload2.prg</div>
<svg class="a" style="left:363px;top:63px;overflow:visible" width="48" height="48"><use href="#prg" x="0" y="0"/></svg>
<div class="t ms" style="left:278px;width:200px;text-align:center;top:115px;color:#fff">Buildupload2db.prg</div>
<svg class="a" style="left:471px;top:63px;overflow:visible" width="48" height="48"><use href="#prg" x="0" y="0"/></svg>
<div class="t ms" style="left:386px;width:200px;text-align:center;top:115px;color:#fff">Bulbs.prg</div>
<svg class="a" style="left:579px;top:63px;overflow:visible" width="48" height="48"><use href="#prg" x="0" y="0"/></svg>
<div class="t ms" style="left:494px;width:200px;text-align:center;top:115px;color:#fff">Checkdatahours.pr</div>
<div class="t ms" style="left:494px;width:200px;text-align:center;top:128px;color:#fff">g</div>
<svg class="a" style="left:687px;top:63px;overflow:visible" width="48" height="48"><use href="#prg" x="0" y="0"/></svg>
<div class="t ms" style="left:602px;width:200px;text-align:center;top:115px;color:#fff">Checkdataoodml.p</div>
<div class="t ms" style="left:602px;width:200px;text-align:center;top:128px;color:#fff">g</div>
<svg class="a" style="left:795px;top:63px;overflow:visible" width="48" height="48"><use href="#prg" x="0" y="0"/></svg>
<div class="t ms" style="left:710px;width:200px;text-align:center;top:115px;color:#fff">Grab.prg</div>
<svg class="a" style="left:903px;top:63px;overflow:visible" width="48" height="48"><use href="#prg" x="0" y="0"/></svg>
<div class="t ms" style="left:818px;width:200px;text-align:center;top:115px;color:#fff">Grabtest2.prg</div>
<svg class="a" style="left:1011px;top:63px;overflow:visible" width="48" height="48"><use href="#prg" x="0" y="0"/></svg>
<div class="t ms" style="left:926px;width:200px;text-align:center;top:115px;color:#fff">Grabtest3.prg</div>
<svg class="a" style="left:1119px;top:63px;overflow:visible" width="48" height="48"><use href="#prg" x="0" y="0"/></svg>
<div class="t ms" style="left:1034px;width:200px;text-align:center;top:115px;color:#fff">Grabtest.prg</div>
<svg class="a" style="left:1227px;top:63px;overflow:visible" width="48" height="48"><use href="#prg" x="0" y="0"/></svg>
<div class="t ms" style="left:1142px;width:200px;text-align:center;top:115px;color:#fff">Hwsim.prg</div>
<svg class="a" style="left:1335px;top:63px;overflow:visible" width="48" height="48"><use href="#prg" x="0" y="0"/></svg>
<div class="t ms" style="left:1250px;width:200px;text-align:center;top:115px;color:#fff">Hwsim2.prg</div>
<svg class="a" style="left:1443px;top:63px;overflow:visible" width="48" height="48"><use href="#prg" x="0" y="0"/></svg>
<div class="t ms" style="left:1358px;width:200px;text-align:center;top:115px;color:#fff">Loadsites.prg</div>
<div class="a" style="left:1404px;top:113px;width:108px;height:13px;border:1px solid #3d8ef0"></div>
<svg class="a" style="left:39px;top:139px;overflow:visible" width="48" height="48"><use href="#prg" x="0" y="0"/></svg>
<div class="t ms" style="left:-46px;width:200px;text-align:center;top:191px;color:#fff">Login.prg</div>
<svg class="a" style="left:147px;top:139px;overflow:visible" width="48" height="48"><use href="#prg" x="0" y="0"/></svg>
<div class="t ms" style="left:62px;width:200px;text-align:center;top:191px;color:#fff">Mainmenu.prg</div>
<svg class="a" style="left:255px;top:139px;overflow:visible" width="48" height="48"><use href="#prg" x="0" y="0"/></svg>
<div class="t ms" style="left:170px;width:200px;text-align:center;top:191px;color:#fff">Seasons.prg</div>
<svg class="a" style="left:363px;top:139px;overflow:visible" width="48" height="48"><use href="#prg" x="0" y="0"/></svg>
<div class="t ms" style="left:278px;width:200px;text-align:center;top:191px;color:#fff">Systemsearch.prg</div>
<svg class="a" style="left:471px;top:139px;overflow:visible" width="48" height="48"><use href="#prg" x="0" y="0"/></svg>
<div class="t ms" style="left:386px;width:200px;text-align:center;top:191px;color:#fff">Test.prg</div>
<svg class="a" style="left:579px;top:139px;overflow:visible" width="48" height="48"><use href="#prg" x="0" y="0"/></svg>
<div class="t ms" style="left:494px;width:200px;text-align:center;top:191px;color:#fff">Upload.prg</div>
<svg class="a" style="left:687px;top:139px;overflow:visible" width="48" height="48"><use href="#prg" x="0" y="0"/></svg>
<div class="t ms" style="left:602px;width:200px;text-align:center;top:191px;color:#fff">Upload2.prg</div>
<svg class="a" style="left:795px;top:139px;overflow:visible" width="48" height="48"><use href="#prg" x="0" y="0"/></svg>
<div class="t ms" style="left:710px;width:200px;text-align:center;top:191px;color:#fff">Ztest.prg</div>
<svg class="a" style="left:903px;top:139px;overflow:visible" width="48" height="48"><use href="#prg" x="0" y="0"/></svg>
<div class="t ms" style="left:818px;width:200px;text-align:center;top:191px;color:#fff">Ztest2.prg</div>
<svg class="a" style="left:1011px;top:139px;overflow:visible" width="48" height="48"><use href="#prg" x="0" y="0"/></svg>
<div class="t ms" style="left:926px;width:200px;text-align:center;top:191px;color:#fff">Ztesthwschema.prg</div>
<svg class="a" style="left:1119px;top:139px;overflow:visible" width="48" height="48"><use href="#prg" x="0" y="0"/></svg>
<div class="t ms" style="left:1034px;width:200px;text-align:center;top:191px;color:#fff">Ztesthwschema.prg</div>
<svg class="a" style="left:1227px;top:139px;overflow:visible" width="48" height="48"><use href="#prg" x="0" y="0"/></svg>
<div class="t ms" style="left:1142px;width:200px;text-align:center;top:191px;color:#fff">Ztestadoschema.pr</div>
<div class="t ms" style="left:1142px;width:200px;text-align:center;top:204px;color:#fff">g</div>
</div>
<div class="a" style="left:305px;top:559px;width:1171px;height:361px;background:#9a9a9a;border-radius:7px 7px 0 0;overflow:hidden"><div class="a" style="left:0;top:0;width:1171px;height:10px;background:#9b9ca1"></div><div class="a" style="left:0;top:10px;width:1171px;height:17px;background:linear-gradient(#8d8d8d,#9b9b9b)"></div><div class="a" style="left:0;top:27px;width:100%;height:5px;background:#a0a0a0"></div></div>
<div class="a" style="left:1473px;top:591px;width:3px;height:329px;background:#a7a7a7"></div><div class="a" style="left:305px;top:917px;width:1171px;height:3px;background:#a7a7a7"></div><div class="a" style="left:307px;top:591px;width:1px;height:326px;background:#a5a5a5"></div>
<svg class="a" style="left:316px;top:567px" width="16" height="14"><rect x="1" y=".5" width="14" height="2.5" fill="#2d66b3"/><rect x="11" y=".8" width="3.5" height="1.2" fill="#8fb4e0"/><rect x="1" y="3" width="14" height="4" fill="#fff"/><rect x="1" y="7" width="14" height="1" fill="#a0a0a0"/><rect x="1" y="8" width="14" height="5" fill="#fff"/><rect x="1.3" y="10.5" width="1.3" height="1.8" fill="#222"/></svg>
<div class="a" style="left:1407px;top:580px;width:7px;height:2px;background:#6a6a6a"></div>
<div class="a" style="left:1430px;top:575px;width:9px;height:7px;border:1px solid #6a6a6a;border-top-width:2px"></div>
<svg class="a" style="left:1451px;top:573px" width="11" height="10"><path d="M1.5 1 L9.5 9 M9.5 1 L1.5 9" stroke="#6a6a6a" stroke-width="2"/></svg>
<div class="a" style="left:314px;top:591px;width:154px;height:321px;background:transparent"></div>
<div class="a" style="left:314px;top:591px;width:1154px;height:1px;background:#6a6a6a"></div>
<div class="a" style="left:314px;top:591px;width:1px;height:321px;background:#6a6a6a"></div>
<div class="a" style="left:315px;top:592px;width:1153px;height:320px;background:#fff"></div>
<div class="a" style="left:316px;top:593px;width:14px;height:144px;background:#efefef"></div>
<div class="a" style="left:331px;top:592px;width:1135px;height:145px;background:#1f2022;border-top:1px solid #0c0c0c;border-left:1px solid #0c0c0c;overflow:hidden">
<div class="t" style="left:0px;top:3px;font-size:16px;line-height:19px;color:#fff"><span style="color:#f0842c;letter-spacing:0.2px">modify command</span> D:\Documents\dbase\SolarOctopus2\loadSites.prg</div>
<div class="t" style="left:0px;top:26px;font-size:16px;line-height:19px;color:#fff"><span style="color:#f0842c;letter-spacing:0.2px">debug</span> D:\Documents\dbase\SolarOctopus2\loadSites.prg</div>
<div class="t" style="left:0px;top:49px;font-size:16px;line-height:19px;color:#fff"><span style="color:#f0842c;letter-spacing:0.2px">modify command</span> D:\Documents\dbase\SolarOctopus2\loadSites.prg</div>
</div>
<div class="a" style="left:315px;top:738px;width:1151px;height:15px;background:#f0f0f0"></div>
<div class="a" style="left:331px;top:738px;width:632px;height:15px;background:#cdcdcd"></div>
<svg class="a" style="left:319px;top:741px" width="8" height="10"><path d="M6 1 L2 5 L6 9" fill="none" stroke="#606060" stroke-width="1.8"/></svg>
<svg class="a" style="left:1453px;top:741px" width="8" height="10"><path d="M2 1 L6 5 L2 9" fill="none" stroke="#606060" stroke-width="1.8"/></svg>
<div class="a" style="left:315px;top:753px;width:1151px;height:6px;background:#c8c8c8;border-top:1px solid #000;border-bottom:1px solid #000"></div>
<div class="a" style="left:315px;top:756px;width:1151px;height:1px;background:#8a8a8a"></div>
<div class="a" style="left:315px;top:759px;width:1134px;height:151px;background:#1f2022"></div>
<div class="a" style="left:1449px;top:759px;width:17px;height:151px;background:#f0f0f0;border-left:1px solid #fff"></div>
<div class="a" style="left:1450px;top:776px;width:15px;height:17px;background:#cdcdcd"></div>
<svg class="a" style="left:1452px;top:764px" width="10" height="8"><path d="M1 6 L5 2 L9 6" fill="none" stroke="#606060" stroke-width="1.8"/></svg>
<svg class="a" style="left:1452px;top:898px" width="10" height="8"><path d="M1 2 L5 6 L9 2" fill="none" stroke="#606060" stroke-width="1.8"/></svg>
<div class="a" style="left:774px;top:335px;width:373px;height:401px;background:#fff;border:1px solid #111;box-shadow:0 2px 12px rgba(0,0,0,.4)"></div>
<div class="t" style="left:783px;top:345px;font-size:12px;color:#101018">Command Window Properties</div>
<svg class="a" style="left:1125px;top:344px" width="12" height="12"><path d="M1 1 L11 11 M11 1 L1 11" stroke="#111" stroke-width="1.1"/></svg>
<div class="a" style="left:781px;top:393px;width:357px;height:306px;background:#fff;border:1px solid #d9d9d9"></div>
<div class="a" style="left:783px;top:375px;width:74px;height:19px;background:#f0f0f0;border:1px solid #d9d9d9"></div>
<div class="a" style="left:900px;top:375px;width:44px;height:19px;background:#f0f0f0;border:1px solid #d9d9d9"></div>
<div class="a" style="left:856px;top:373px;width:45px;height:21px;background:#fff;border:1px solid #d9d9d9;border-bottom:none"></div>
<div class="t dl" style="left:789px;top:380px">Results Pane</div>
<div class="t dl" style="left:864px;top:378px">Editor</div>
<div class="t dl" style="left:906px;top:380px">Display</div>
<div class="t dl" style="left:792px;top:415px">Editor Presets:</div>
<div class="a" style="left:901px;top:410px;width:150px;height:21px;background:#e1e1e1;border:1px solid #adadad"></div>
<div class="t dl" style="left:905px;top:415px">dBASE Classic</div>
<svg class="a" style="left:1036px;top:416px" width="12" height="8"><path d="M1.5 1.5 L6 6 L10.5 1.5" fill="none" stroke="#333" stroke-width="1.2"/></svg>
<div class="a" style="left:1058px;top:411px;width:70px;height:21px;background:#e1e1e1;border:1px solid #adadad"></div><div class="t dl" style="left:1058px;width:70px;text-align:center;top:417px">Reset</div>
<div class="a" style="left:792px;top:444px;width:338px;height:149px;border:1px solid #dcdcdc"></div>
<div class="t dl" style="left:800px;top:440px;background:#fff;padding:0 1px">Settings</div>
<div class="a" style="left:801px;top:454px;width:13px;height:13px;background:#fff;border:1px solid #333"></div><svg class="a" style="left:801px;top:454px" width="13" height="13"><path d="M2.5 6.5 L5 9.5 L10.5 3" fill="none" stroke="#222" stroke-width="1.3"/></svg>
<div class="t dl" style="left:817px;top:456px">Syntax Highlighting</div>
<div class="a" style="left:801px;top:474px;width:13px;height:13px;background:#fff;border:1px solid #333"></div>
<div class="t dl" style="left:817px;top:476px">Auto Complete</div>
<div class="a" style="left:801px;top:493px;width:13px;height:13px;background:#fff;border:1px solid #333"></div><svg class="a" style="left:801px;top:493px" width="13" height="13"><path d="M2.5 6.5 L5 9.5 L10.5 3" fill="none" stroke="#222" stroke-width="1.3"/></svg>
<div class="t dl" style="left:817px;top:495px">Code Hints</div>
<div class="a" style="left:801px;top:512px;width:13px;height:13px;background:#fff;border:1px solid #333"></div><svg class="a" style="left:801px;top:512px" width="13" height="13"><path d="M2.5 6.5 L5 9.5 L10.5 3" fill="none" stroke="#222" stroke-width="1.3"/></svg>
<div class="t dl" style="left:817px;top:514px">Auto Indent</div>
<div class="a" style="left:801px;top:532px;width:13px;height:13px;background:#fff;border:1px solid #333"></div><svg class="a" style="left:801px;top:532px" width="13" height="13"><path d="M2.5 6.5 L5 9.5 L10.5 3" fill="none" stroke="#222" stroke-width="1.3"/></svg>
<div class="t dl" style="left:817px;top:534px">Smart Indent</div>
<div class="a" style="left:801px;top:551px;width:13px;height:13px;background:#fff;border:1px solid #333"></div>
<div class="t dl" style="left:817px;top:553px">Indentation Guides</div>
<div class="a" style="left:801px;top:571px;width:13px;height:13px;background:#fff;border:1px solid #333"></div>
<div class="t dl" style="left:817px;top:573px">Tab Inserts Spaces</div>
<div class="a" style="left:937px;top:454px;width:13px;height:13px;background:#fff;border:1px solid #333"></div>
<div class="t dl" style="left:953px;top:456px">Show Whitespace</div>
<div class="a" style="left:937px;top:474px;width:13px;height:13px;background:#fff;border:1px solid #333"></div>
<div class="t dl" style="left:953px;top:476px">Show EOL Characters</div>
<div class="a" style="left:937px;top:493px;width:13px;height:13px;background:#fff;border:1px solid #333"></div><svg class="a" style="left:937px;top:493px" width="13" height="13"><path d="M2.5 6.5 L5 9.5 L10.5 3" fill="none" stroke="#222" stroke-width="1.3"/></svg>
<div class="t dl" style="left:953px;top:495px">Margin - Line Numbers</div>
<div class="a" style="left:937px;top:512px;width:13px;height:13px;background:#fff;border:1px solid #333"></div><svg class="a" style="left:937px;top:512px" width="13" height="13"><path d="M2.5 6.5 L5 9.5 L10.5 3" fill="none" stroke="#222" stroke-width="1.3"/></svg>
<div class="t dl" style="left:953px;top:514px">Margin - Code Folding</div>
<div class="a" style="left:937px;top:532px;width:13px;height:13px;background:#fff;border:1px solid #333"></div><svg class="a" style="left:937px;top:532px" width="13" height="13"><path d="M2.5 6.5 L5 9.5 L10.5 3" fill="none" stroke="#222" stroke-width="1.3"/></svg>
<div class="t dl" style="left:953px;top:534px">Overlay - Column Line</div>
<div class="a" style="left:1075px;top:530px;width:45px;height:18px;background:#fff;border:1px solid #7a7a7a"></div><div class="t dl" style="left:1078px;top:534px;color:#000">80</div><div class="a" style="left:1099px;top:530px;width:21px;height:18px;background:#e1e1e1;border:1px solid #8a8a8a"></div><div class="a" style="left:1100px;top:538px;width:19px;height:1px;background:#8a8a8a"></div><svg class="a" style="left:1099px;top:530px" width="21" height="18"><path d="M6.5 6.0 L10.5 2.0 L14.5 6.0 Z" fill="#000"/><path d="M6.5 11.0 L14.5 11.0 L10.5 15.0 Z" fill="#000"/></svg>
<div class="t dl" style="left:891px;top:652px">Tab size:</div>
<div class="t dl" style="left:975px;top:652px">Block indent:</div>
<div class="a" style="left:891px;top:667px;width:45px;height:20px;background:#fff;border:1px solid #cccccc"></div><div class="t dl" style="left:894px;top:672px;color:#6d6d6d">3</div><div class="a" style="left:915px;top:667px;width:21px;height:20px;background:#e1e1e1;border:1px solid #8a8a8a"></div><div class="a" style="left:916px;top:676px;width:19px;height:1px;background:#8a8a8a"></div><svg class="a" style="left:915px;top:667px" width="21" height="20"><path d="M6.5 7.0 L10.5 3.0 L14.5 7.0 Z" fill="#a0a0a0"/><path d="M6.5 12.0 L14.5 12.0 L10.5 16.0 Z" fill="#a0a0a0"/></svg>
<div class="a" style="left:975px;top:667px;width:45px;height:20px;background:#fff;border:1px solid #7a7a7a"></div><div class="t dl" style="left:978px;top:672px;color:#000">3</div><div class="a" style="left:999px;top:667px;width:21px;height:20px;background:#e1e1e1;border:1px solid #8a8a8a"></div><div class="a" style="left:1000px;top:676px;width:19px;height:1px;background:#8a8a8a"></div><svg class="a" style="left:999px;top:667px" width="21" height="20"><path d="M6.5 7.0 L10.5 3.0 L14.5 7.0 Z" fill="#000"/><path d="M6.5 12.0 L14.5 12.0 L10.5 16.0 Z" fill="#000"/></svg>
<div class="a" style="left:835px;top:707px;width:70px;height:21px;background:#e1e1e1;border:2px solid #0078d7"></div><div class="t dl" style="left:835px;width:70px;text-align:center;top:713px">OK</div>
<div class="a" style="left:913px;top:707px;width:70px;height:21px;background:#e1e1e1;border:1px solid #adadad"></div><div class="t dl" style="left:913px;width:70px;text-align:center;top:713px">Cancel</div>
<div class="a" style="left:991px;top:707px;width:70px;height:21px;background:#e1e1e1;border:1px solid #adadad"></div><div class="t dl" style="left:991px;width:70px;text-align:center;top:713px">Help</div>
<div class="a" style="left:1069px;top:707px;width:70px;height:21px;background:#e1e1e1;border:1px solid #adadad"></div><div class="t dl" style="left:1069px;width:70px;text-align:center;top:713px">Apply</div>
</body></html>
